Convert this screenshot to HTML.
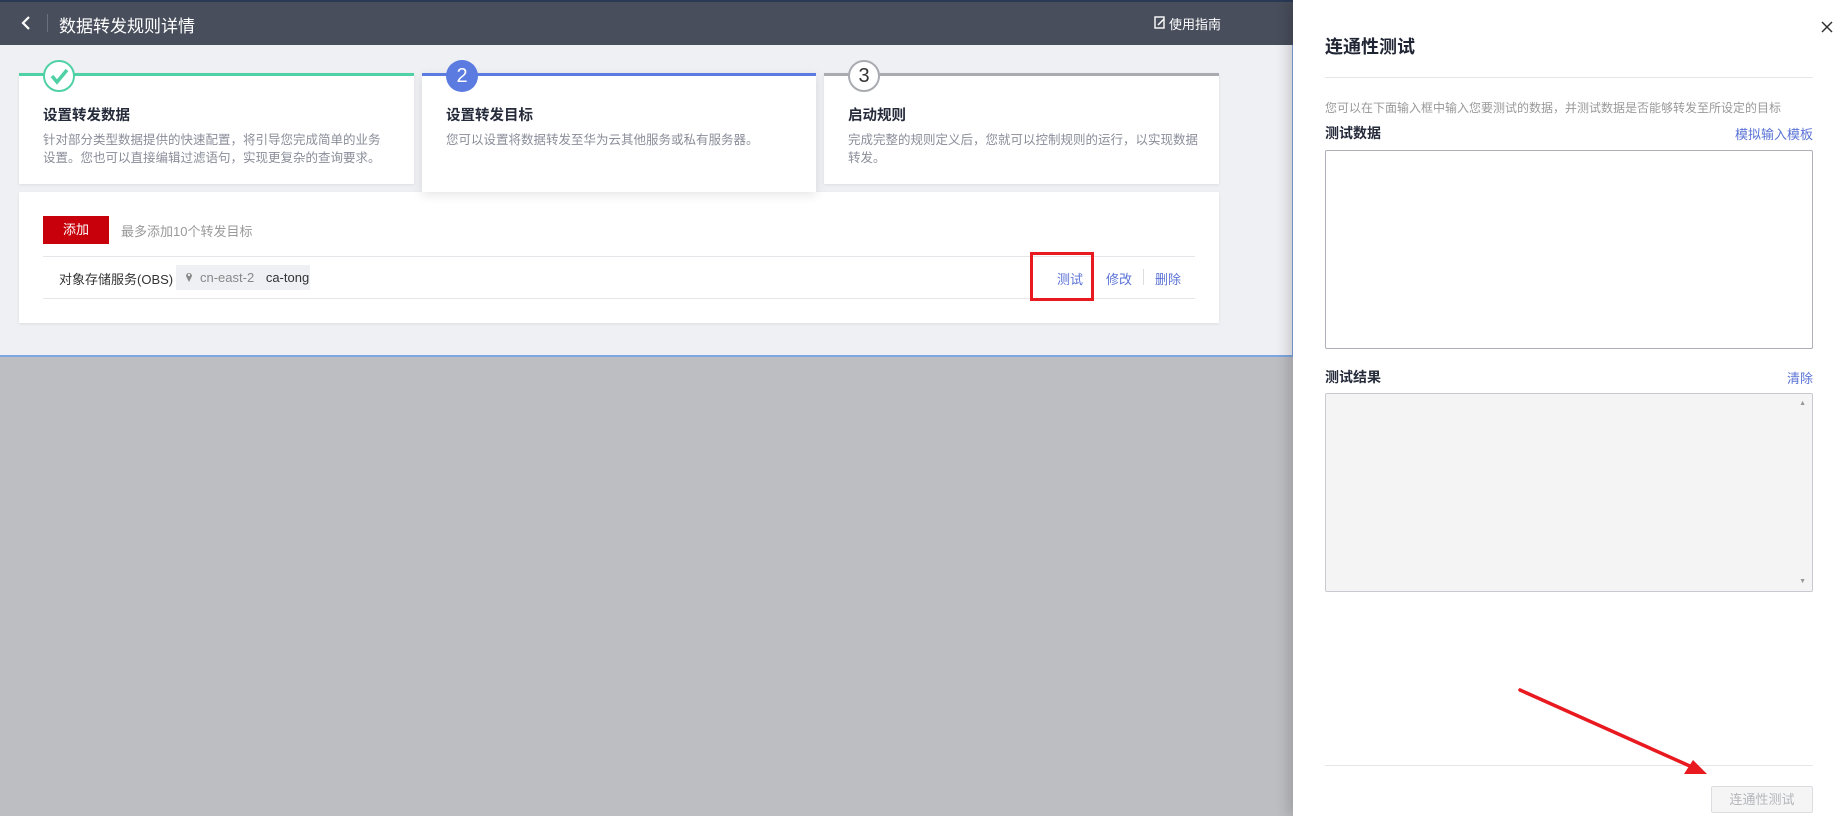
<!DOCTYPE html>
<html><head><meta charset="utf-8"><style>
*{box-sizing:border-box;margin:0;padding:0}
body{width:1848px;height:816px;overflow:hidden;position:relative;background:#bdbec2;font-family:"Liberation Sans","Noto Sans CJK SC",sans-serif;}
.abs{position:absolute}
#left{left:0;top:0;width:1293px;height:357px;background:#eff0f4;border-bottom:2px solid #7ea6e0;border-right:1px solid #7ea6e0}
#hdr{left:0;top:0;width:1293px;height:45px;background:#484e5b;border-top:2px solid #2a3a55}
.card{background:#fff;box-shadow:0 1px 3px rgba(0,0,0,.08)}
.step{top:73px;height:111px}
.step .t{position:absolute;left:24px;top:28px;font-size:14.5px;font-weight:bold;color:#252b3a}
.step .d{position:absolute;left:24px;top:55px;width:342px;font-size:12.5px;line-height:18px;color:#8a8e99}
.circ{position:absolute;top:-16px;width:32px;height:32px;border-radius:50%;background:#fff;text-align:center;line-height:28px;font-size:20px}
.lnk{color:#5b73d6;font-size:13px}
#drawer{left:1293px;top:0;width:555px;height:816px;background:#fff;box-shadow:-6px 0 12px rgba(0,0,0,.15)}
</style></head><body>
<div id="left" class="abs"></div>
<div id="hdr" class="abs">
 <svg class="abs" style="left:20px;top:13px" width="12" height="16"><path d="M9 2 L3 8 L9 14" stroke="#fff" stroke-width="2.2" fill="none"/></svg>
 <div class="abs" style="left:47px;top:12px;width:1px;height:18px;background:#6a707c"></div>
 <div class="abs" style="left:59px;top:10px;color:#fff;font-size:17px">数据转发规则详情</div>
 <svg class="abs" style="left:1154px;top:14px" width="12" height="13"><rect x="1" y="1" width="9" height="11" fill="none" stroke="#fff" stroke-width="1.4"/><path d="M4 9 L10 3" stroke="#fff" stroke-width="1.5"/></svg>
 <div class="abs" style="left:1169px;top:12px;color:#fff;font-size:13px">使用指南</div>
</div>
<div class="abs card step" style="left:19px;width:395px;border-top:3px solid #4fd1a5">
 <div class="circ" style="left:24px;border:2px solid #4fd1a5"><svg width="28" height="28"><path d="M7 14 L12 20 L22 8" stroke="#4fd1a5" stroke-width="3.5" fill="none"/></svg></div>
 <div class="t">设置转发数据</div>
 <div class="d">针对部分类型数据提供的快速配置，将引导您完成简单的业务设置。您也可以直接编辑过滤语句，实现更复杂的查询要求。</div>
</div>
<div class="abs card step" style="left:422px;width:394px;height:119px;border-top:3px solid #5b7be0;box-shadow:0 3px 10px rgba(0,0,0,.1);z-index:2">
 <div class="circ" style="left:24px;background:#5b7be0;color:#fff;line-height:32px">2</div>
 <div class="t">设置转发目标</div>
 <div class="d" style="width:360px">您可以设置将数据转发至华为云其他服务或私有服务器。</div>
</div>
<div class="abs card step" style="left:824px;width:395px;border-top:3px solid #a9abb1">
 <div class="circ" style="left:24px;border:2px solid #a9abb1;color:#333">3</div>
 <div class="t">启动规则</div>
 <div class="d" style="width:360px">完成完整的规则定义后，您就可以控制规则的运行，以实现数据转发。</div>
</div>
<div class="abs card" style="left:19px;top:192px;width:1200px;height:131px"></div>
<div class="abs" style="left:43px;top:216px;width:66px;height:28px;background:#c7000b;color:#fff;font-size:13px;text-align:center;line-height:28px">添加</div>
<div class="abs" style="left:121px;top:221px;font-size:13px;color:#999">最多添加10个转发目标</div>
<div class="abs" style="left:43px;top:256px;width:1152px;height:1px;background:#e5e6ea"></div>
<div class="abs" style="left:43px;top:298px;width:1152px;height:1px;background:#e5e6ea"></div>
<div class="abs" style="left:59px;top:269px;font-size:13px;color:#333">对象存储服务(OBS)</div>
<div class="abs" style="left:176px;top:265px;width:134px;height:25px;background:#eef0f4;font-size:13px;line-height:25px;padding-left:24px;color:#888">cn-east-2 <span style="color:#333;margin-left:8px">ca-tong</span>
 <svg class="abs" style="left:9px;top:6px" width="8" height="12"><path d="M4 11 L1 5 A3 3 0 1 1 7 5 Z" fill="#888"/><circle cx="4" cy="4" r="1.2" fill="#eef0f4"/></svg></div>
<div class="abs lnk" style="left:1057px;top:269px">测试</div>
<div class="abs lnk" style="left:1106px;top:269px">修改</div>
<div class="abs" style="left:1143px;top:269px;width:1px;height:16px;background:#ddd"></div>
<div class="abs lnk" style="left:1155px;top:269px">删除</div>
<div class="abs" style="left:1030px;top:252px;width:64px;height:49px;border:3px solid #e8191f"></div>

<div id="drawer" class="abs">
 <svg class="abs" style="left:527px;top:20px" width="14" height="14"><path d="M2 2 L12 12 M12 2 L2 12" stroke="#333" stroke-width="1.5"/></svg>
 <div class="abs" style="left:32px;top:33px;font-size:18px;color:#1f2533;font-weight:bold">连通性测试</div>
 <div class="abs" style="left:32px;top:77px;width:488px;height:1px;background:#e5e6ea"></div>
 <div class="abs" style="left:32px;top:99px;font-size:12px;color:#999">您可以在下面输入框中输入您要测试的数据，并测试数据是否能够转发至所设定的目标</div>
 <div class="abs" style="left:32px;top:123px;font-size:14px;font-weight:bold;color:#252b3a">测试数据</div>
 <div class="abs lnk" style="right:35px;top:124px">模拟输入模板</div>
 <div class="abs" style="left:32px;top:150px;width:488px;height:199px;border:1px solid #adb0b8;border-radius:2px"></div>
 <div class="abs" style="left:32px;top:367px;font-size:14px;font-weight:bold;color:#252b3a">测试结果</div>
 <div class="abs lnk" style="right:35px;top:368px">清除</div>
 <div class="abs" style="left:32px;top:393px;width:488px;height:199px;border:1px solid #c8cacf;border-radius:2px;background:#f4f4f4">
  <div class="abs" style="right:6px;top:6px;font-size:7px;color:#999">▲</div>
  <div class="abs" style="right:6px;bottom:6px;font-size:7px;color:#999">▼</div>
 </div>
 <div class="abs" style="left:32px;top:765px;width:488px;height:1px;background:#e5e6ea"></div>
 <div class="abs" style="left:418px;top:786px;width:102px;height:27px;border:1px solid #dcdde0;background:#f5f5f6;color:#b4b6bb;font-size:13px;text-align:center;line-height:25px;border-radius:2px">连通性测试</div>
</div>
<svg class="abs" style="left:0;top:0" width="1848" height="816"><line x1="1520" y1="690" x2="1692" y2="767" stroke="#e8191f" stroke-width="3.5" stroke-linecap="round"/><polygon points="1707,774 1684,774 1693,760" fill="#e8191f"/></svg>
</body></html>
